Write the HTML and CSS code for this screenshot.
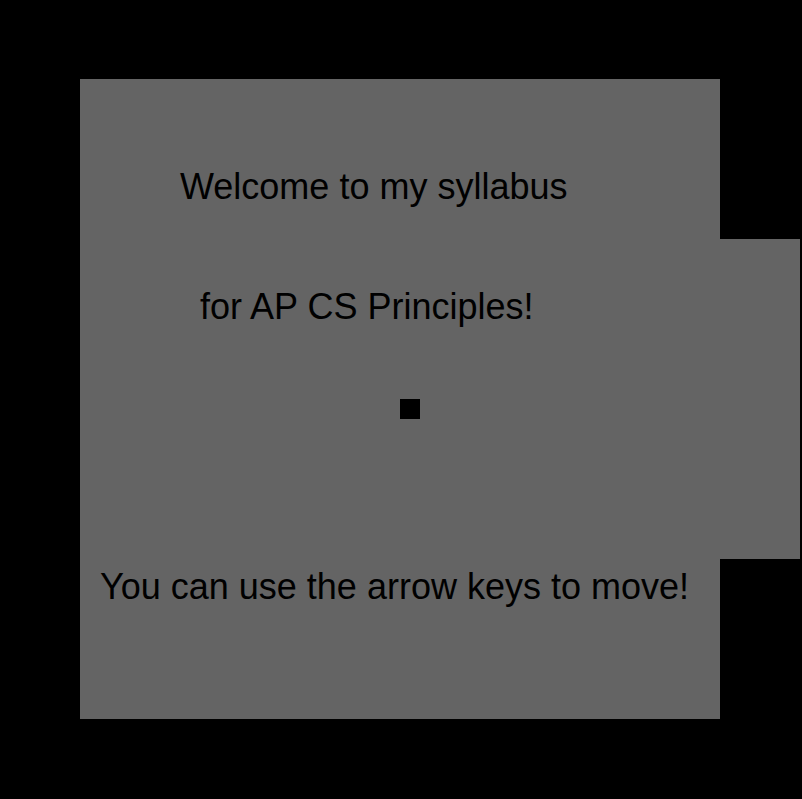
FILE: index.html
```html
<!DOCTYPE html>
<html>
<head>
<meta charset="utf-8">
<link rel="stylesheet" href="styles.css">
</head>
<body>
<div class="stage">
  <div class="room"></div>
  <div class="corridor"></div>
  <p class="msg msg-welcome">Welcome to my syllabus</p>
  <p class="msg msg-course">for AP CS Principles!</p>
  <p class="msg msg-help">You can use the arrow keys to move!</p>
  <div class="player"></div>
</div>
</body>
</html>
```
FILE: styles.css
```css
html, body {
  margin: 0;
  padding: 0;
  background: #000;
  overflow: hidden;
}
.stage {
  position: relative;
  width: 802px;
  height: 799px;
  background: #000;
}
.room {
  position: absolute;
  left: 80px;
  top: 79px;
  width: 640px;
  height: 640px;
  background: #646464;
}
.corridor {
  position: absolute;
  left: 720px;
  top: 239px;
  width: 80px;
  height: 320px;
  background: #646464;
}
.player {
  position: absolute;
  left: 400px;
  top: 399px;
  width: 20px;
  height: 20px;
  background: #000;
}
.msg {
  position: absolute;
  margin: 0;
  font-family: "Liberation Sans", Arial, sans-serif;
  font-size: 36px;
  line-height: 36px;
  color: #000;
  white-space: nowrap;
}
.msg-welcome { left: 180px; top: 169px; }
.msg-course { left: 200px; top: 289px; }
.msg-help { left: 100px; top: 569px; }
```
